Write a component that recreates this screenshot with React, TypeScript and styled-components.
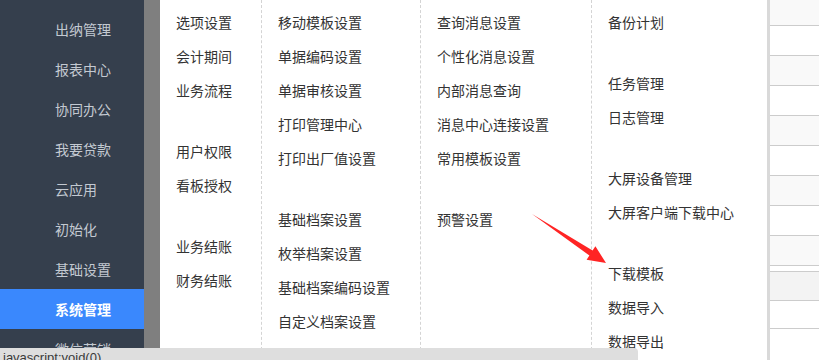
import React from "react";
import styled, { createGlobalStyle } from "styled-components";

const GlobalStyle = createGlobalStyle`
  html, body {
    margin: 0;
    padding: 0;
    width: 819px;
    height: 360px;
    overflow: hidden;
    background: #fff;
  }
  * {
    box-sizing: border-box;
  }
`;

const Page = styled.div`
  display: flex;
  width: 819px;
  height: 360px;
  overflow: hidden;
  position: relative;
  font-family: "Noto Sans CJK SC", "Noto Sans", sans-serif;
`;

const Sidebar = styled.nav`
  width: 144px;
  flex-shrink: 0;
  background: #353f4d;
  padding-top: 9px;
  display: flex;
  flex-direction: column;
`;

const NavItem = styled.div<{ $active?: boolean }>`
  height: 40px;
  line-height: 40px;
  padding-left: 55px;
  font-size: 14px;
  color: ${(p) => (p.$active ? "#fff" : "#c3c9d1")};
  font-weight: ${(p) => (p.$active ? 700 : 400)};
  background: ${(p) => (p.$active ? "#3a88fd" : "transparent")};
  white-space: nowrap;
`;

const Strip = styled.div`
  width: 16px;
  flex-shrink: 0;
  background: #7f7f7f;
`;

const Panel = styled.div`
  width: 607px;
  flex-shrink: 0;
  display: flex;
  background: #fff;
`;

const Column = styled.div<{ $width: number; $last?: boolean }>`
  width: ${(p) => p.$width}px;
  flex-shrink: 0;
  padding: 5px 0 0 16px;
  border-right: ${(p) => (p.$last ? "none" : "1px dashed #d4d4d4")};
`;

const Group = styled.ul`
  list-style: none;
  margin: 0 0 27px 0;
  padding: 0;
`;

const Link = styled.li`
  height: 34px;
  line-height: 34px;
  font-size: 14px;
  color: #333;
  white-space: nowrap;
`;

const Divider = styled.div`
  width: 3px;
  flex-shrink: 0;
  background: #d9d9d9;
`;

const Table = styled.div`
  flex: 1;
  display: flex;
  flex-direction: column;
`;

const TableRow = styled.div<{ $h: number; $bg: string }>`
  height: ${(p) => p.$h}px;
  flex-shrink: 0;
  background: ${(p) => p.$bg};
  border-bottom: 1px solid #cccccc;
`;

// browser link-preview bubble, lying over the bottom of the page
const StatusBar = styled.div`
  position: absolute;
  left: 0;
  top: 348px;
  width: 638px;
  height: 20px;
  background: #dedede;
  border-top-right-radius: 4px;
  padding: 2px 0 0 3px;
  font-family: "Liberation Sans", Arial, sans-serif;
  font-size: 13px;
  line-height: 16px;
  color: #3a3a3a;
`;

const Arrow = styled.svg`
  position: absolute;
  left: 0;
  top: 0;
  pointer-events: none;
`;

const navItems = [
  "出纳管理",
  "报表中心",
  "协同办公",
  "我要贷款",
  "云应用",
  "初始化",
  "基础设置",
  "系统管理",
  "微信营销",
];

const columns: { width: number; groups: string[][] }[] = [
  {
    width: 102,
    groups: [
      ["选项设置", "会计期间", "业务流程"],
      ["用户权限", "看板授权"],
      ["业务结账", "财务结账"],
    ],
  },
  {
    width: 159,
    groups: [
      ["移动模板设置", "单据编码设置", "单据审核设置", "打印管理中心", "打印出厂值设置"],
      ["基础档案设置", "枚举档案设置", "基础档案编码设置", "自定义档案设置"],
    ],
  },
  {
    width: 171,
    groups: [
      ["查询消息设置", "个性化消息设置", "内部消息查询", "消息中心连接设置", "常用模板设置"],
      ["预警设置"],
    ],
  },
  {
    width: 175,
    groups: [
      ["备份计划"],
      ["任务管理", "日志管理"],
      ["大屏设备管理", "大屏客户端下载中心"],
      ["下载模板", "数据导入", "数据导出"],
    ],
  },
];

const tableRows = [
  { h: 26, bg: "#f9f9f9" },
  { h: 30, bg: "#fff" },
  { h: 30, bg: "#f9f9f9" },
  { h: 30, bg: "#fff" },
  { h: 30, bg: "#f9f9f9" },
  { h: 30, bg: "#fff" },
  { h: 30, bg: "#f9f9f9" },
  { h: 30, bg: "#fff" },
  { h: 30, bg: "#f9f9f9" },
  { h: 6, bg: "#fff" },
  { h: 29, bg: "#f3f3f3" },
  { h: 28, bg: "#fff" },
  { h: 40, bg: "#fff" },
];

const App = () => {
  return (
    <>
      <GlobalStyle />
      <Page>
        <Sidebar>
          {navItems.map((item) => (
            <NavItem key={item} $active={item === "系统管理"}>
              {item}
            </NavItem>
          ))}
        </Sidebar>
        <Strip />
        <Panel>
          {columns.map((col, i) => (
            <Column key={i} $width={col.width} $last={i === columns.length - 1}>
              {col.groups.map((group, j) => (
                <Group key={j}>
                  {group.map((link) => (
                    <Link key={link}>{link}</Link>
                  ))}
                </Group>
              ))}
            </Column>
          ))}
        </Panel>
        <Divider />
        <Table>
          {tableRows.map((row, i) => (
            <TableRow key={i} $h={row.h} $bg={row.bg} />
          ))}
        </Table>
        <Arrow width="819" height="360" viewBox="0 0 819 360">
          <polygon
            points="532,214 592.6,250.5 595.4,246.3 606,263 586.6,259.7 589.4,255.5"
            fill="#ff2424"
          />
        </Arrow>
        <StatusBar>javascript:void(0)</StatusBar>
      </Page>
    </>
  );
};

export default App;
